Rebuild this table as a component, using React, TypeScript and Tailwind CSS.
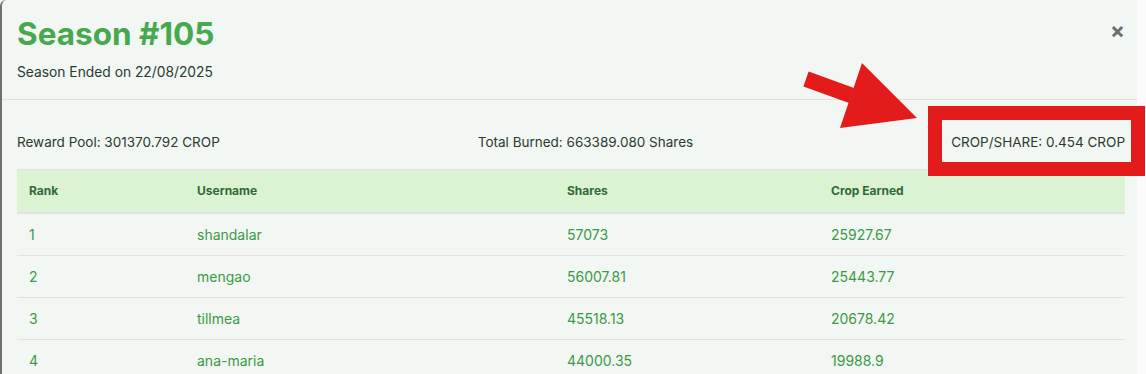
const rows = [
  { rank: 1, user: "shandalar", shares: "57073", earned: "25927.67" },
  { rank: 2, user: "mengao", shares: "56007.81", earned: "25443.77" },
  { rank: 3, user: "tillmea", shares: "45518.13", earned: "20678.42" },
  { rank: 4, user: "ana-maria", shares: "44000.35", earned: "19988.9" },
];

const cols = "grid grid-cols-[168px_370px_264px_1fr]";

export default function App() {
  return (
    <div className="relative w-[1146px] h-[374px] overflow-hidden bg-[#fafbfa] font-['Inter','Noto_Sans',sans-serif]">
      <div className="w-[1137px] h-full bg-[#f2f7f3] border-l-2 border-[#707070] rounded-tl-md">
        <div className="flex justify-between items-start pl-[15px] pr-[12px] pt-[14px] pb-[17px] border-b border-[#dde1de]">
          <div>
            <h1 className="text-[31.5px] leading-[40px] font-bold text-[#47a84f]">Season #105</h1>
            <p className="mt-2 text-[13.8px] leading-5 text-[#2b3a30]">Season Ended on 22/08/2025</p>
          </div>
          <button className="mt-[5px] text-[22px] leading-[22px] font-bold text-[#6c6f70]">×</button>
        </div>

        <div className="pl-[15px] pr-[12px] pt-[32px]">
          <div className="flex justify-between text-[13.5px] leading-5 text-[#2b3a30]">
            <span>Reward Pool: 301370.792 CROP</span>
            <span>Total Burned: 663389.080 Shares</span>
            <span>CROP/SHARE: 0.454 CROP</span>
          </div>

          <div className="mt-[17px]">
            <div className={`${cols} h-[45px] items-center bg-[#dbf2d3] border-t border-b-2 border-[#dee2e6] text-xs font-bold text-[#2f6a36]`}>
              <div className="px-3">Rank</div>
              <div className="px-3">Username</div>
              <div className="px-3">Shares</div>
              <div className="px-3">Crop Earned</div>
            </div>
            {rows.map((r) => (
              <div key={r.rank} className={`${cols} h-[42px] items-center border-b border-[#dee2e6] text-sm text-[#3a9a45]`}>
                <div className="px-3">{r.rank}</div>
                <div className="px-3">{r.user}</div>
                <div className="px-3">{r.shares}</div>
                <div className="px-3">{r.earned}</div>
              </div>
            ))}
          </div>
        </div>
      </div>

      {/* annotation */}
      <div className="absolute left-[928px] top-[106px] w-[217px] h-[70px] border-[14px] border-[#e41b1b]" />
      <svg className="absolute inset-0 pointer-events-none" width="1146" height="374">
        <polygon points="808.6,71.4 803.4,86.6 849,103 854,88" fill="#e41b1b" />
        <polygon points="862,63 917,118 840,128" fill="#e41b1b" />
      </svg>
    </div>
  );
}
